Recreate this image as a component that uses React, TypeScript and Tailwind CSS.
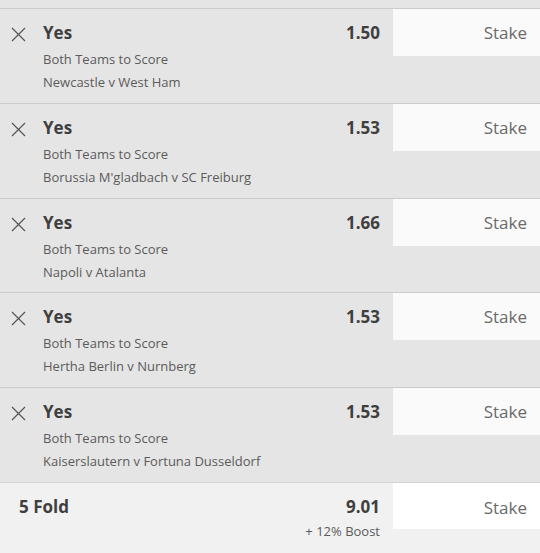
const bets = [
  { odds: "1.50", match: "Newcastle v West Ham" },
  { odds: "1.53", match: "Borussia M'gladbach v SC Freiburg" },
  { odds: "1.66", match: "Napoli v Atalanta" },
  { odds: "1.53", match: "Hertha Berlin v Nurnberg" },
  { odds: "1.53", match: "Kaiserslautern v Fortuna Dusseldorf" },
];

function CloseIcon() {
  return (
    <svg width="15" height="15" viewBox="0 0 15 15" className="text-[#555]">
      <path d="M1 1 L14 14 M14 1 L1 14" stroke="currentColor" strokeWidth="1.2" fill="none" />
    </svg>
  );
}

function BetRow({ odds, match }: { odds: string; match: string }) {
  return (
    <div className="flex h-[94.8px] border-t border-[#cccccc] bg-[#e5e5e5]">
      <div className="w-[43px] pl-[11px] pt-[18px]">
        <CloseIcon />
      </div>
      <div className="flex-1 pt-[13px]">
        <div className="text-[17px] font-bold leading-[22px] text-[#3f3f3f]">Yes</div>
        <div className="mt-[4px] text-[13px] leading-[23px] text-[#5b5b5b]">Both Teams to Score</div>
        <div className="text-[13px] leading-[23px] text-[#5b5b5b]">{match}</div>
      </div>
      <div className="w-[60px] pr-[13px] pt-[13px] text-right text-[17px] font-bold leading-[22px] text-[#3f3f3f]">
        {odds}
      </div>
      <div className="h-[47px] w-[147px] bg-[#fafafa] pr-[13px] pt-[13px] text-right text-[17px] leading-[22px] text-[#6a6a6a]">
        Stake
      </div>
    </div>
  );
}

export default function App() {
  return (
    <div className="h-[553px] w-[540px] overflow-hidden bg-[#f1f1f1] font-['Open_Sans',sans-serif]">
      <div className="h-[8px] bg-[#e5e5e5]" />
      {bets.map((b, i) => (
        <BetRow key={i} odds={b.odds} match={b.match} />
      ))}
      <div className="flex border-t border-[#d4d4d4] bg-[#f1f1f1]">
        <div className="flex-1 pl-[19px] pt-[13px] text-[17px] font-bold leading-[22px] text-[#3f3f3f]">5 Fold</div>
        <div className="pr-[13px] pt-[13px] text-right">
          <div className="text-[17px] font-bold leading-[22px] text-[#3f3f3f]">9.01</div>
          <div className="mt-[4px] text-[13px] leading-[18px] text-[#5b5b5b]">+ 12% Boost</div>
        </div>
        <div className="h-[46px] w-[147px] bg-white pr-[13px] pt-[14px] text-right text-[17px] leading-[22px] text-[#6a6a6a]">
          Stake
        </div>
      </div>
    </div>
  );
}
